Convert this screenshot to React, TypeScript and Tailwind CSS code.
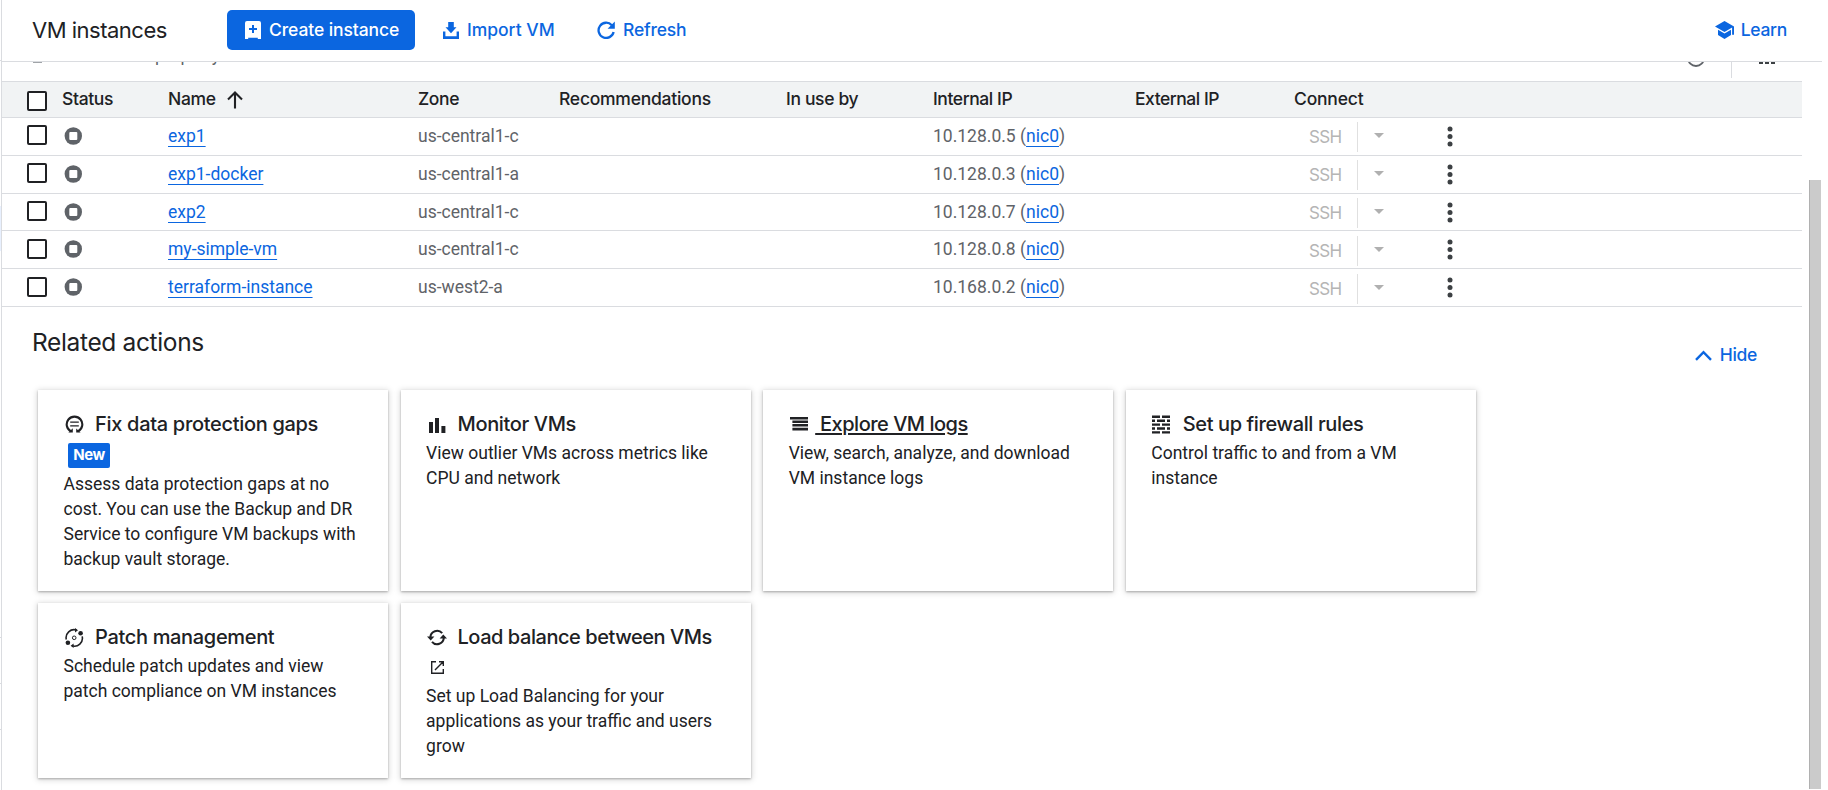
import React from "react";

const INTER = "font-['Inter',sans-serif]";

const vms = [
  { name: "exp1", zone: "us-central1-c", ip: "10.128.0.5", row: "h-[38px]", nudge: "pt-0" },
  { name: "exp1-docker", zone: "us-central1-a", ip: "10.128.0.3", row: "h-[38px]", nudge: "pt-0" },
  { name: "exp2", zone: "us-central1-c", ip: "10.128.0.7", row: "h-[37px]", nudge: "pt-0" },
  { name: "my-simple-vm", zone: "us-central1-c", ip: "10.128.0.8", row: "h-[38px]", nudge: "pt-px" },
  { name: "terraform-instance", zone: "us-west2-a", ip: "10.168.0.2", row: "h-[38px]", nudge: "pt-px" },
];

const GRID =
  "grid grid-cols-[60px_106px_250px_141px_227px_147px_202px_159px_143px_1fr]";

function CheckBox() {
  return <span className="block size-5 rounded-[2px] border-2 border-[#202124] bg-white" />;
}

function CreateIcon() {
  return (
    <svg width="16" height="18" viewBox="0 0 16 18" className="shrink-0">
      <path
        fillRule="evenodd"
        fill="#fff"
        d="M2 0h12a2 2 0 0 1 2 2v16h-3.2v-1.3H3.2V18H0V2a2 2 0 0 1 2-2zm5 4v3H4v2h3v3h2V9h3V7H9V4z"
      />
    </svg>
  );
}

function ImportIcon() {
  return (
    <svg width="16" height="17" viewBox="0 0 16 17" className="shrink-0" fill="#0b66e0">
      <path d="M5.2 0h5.6v5.2h2.7L8 11.2 2.5 5.2h2.7z" />
      <path d="M0 9.5h2.4v4.7h11.2V9.5H16V17H0z" />
    </svg>
  );
}

function RefreshIcon() {
  return (
    <svg width="18" height="18" viewBox="0 0 18 18" className="shrink-0">
      <path d="M14.8 4.2A7.6 7.6 0 1 0 16.6 11" fill="none" stroke="#0b66e0" strokeWidth="2.3" />
      <path d="M17.8.6v7.2h-7.2z" fill="#0b66e0" />
    </svg>
  );
}

function LearnIcon() {
  return (
    <svg width="19" height="18" viewBox="0 0 19 18" className="shrink-0" fill="#0b66e0">
      <path d="M9.5 0 19 5.4v8.4h-1.9V6.6L9.5 11 0 5.4z" />
      <path d="M3 8.8 9.5 12.6 16 8.8v5.1L9.5 18 3 13.9z" />
    </svg>
  );
}

function StatusIcon() {
  return (
    <svg width="18" height="18" viewBox="0 0 18 18">
      <circle cx="9.3" cy="9" r="8.7" fill="#5f6368" />
      <rect x="5.3" y="5" width="8" height="8" rx="1" fill="#fff" />
    </svg>
  );
}

function ProtectIcon() {
  return (
    <svg width="19" height="19" viewBox="0 0 19 19" fill="none" stroke="#202124">
      <path d="M6 16.4A7.8 7.8 0 1 1 13 16.4" strokeWidth="2.1" />
      <path d="M3.4 17.6h4.4v-4.4M15.6 17.6h-4.4v-4" strokeWidth="0" fill="#202124" />
      <path d="M5.2 7.2h8.6M5.2 10.8h8.6" strokeWidth="1.3" />
    </svg>
  );
}

function BarsIcon() {
  return (
    <svg width="19" height="19" viewBox="0 0 19 19" fill="#202124">
      <path d="M2 7h4v11H2zM8 3h4v15H8zM14.4 11h4v7h-4z" />
    </svg>
  );
}

function LogsIcon() {
  return (
    <svg width="19" height="19" viewBox="0 0 19 19" fill="#202124">
      <path d="M0 2h18v2.4H0zM2.4 5.4H18v2.5H2.4zM2.4 9.1H18v2.5H2.4zM2.4 12.8H18v2.6H2.4z" />
    </svg>
  );
}

function FirewallIcon() {
  return (
    <svg width="19" height="19" viewBox="0 0 19 19" fill="#202124">
      <path d="M0 .5h8v2.4H0zM10 .5h8v2.4h-8zM0 4.5h3v2.4H0zM5 4.5h8v2.4H5zM15 4.5h3v2.4h-3zM0 8.4h8v2.4H0zM10 8.4h8v2.4h-8zM0 12.3h3v2.4H0zM5 12.3h8v2.4H5zM15 12.3h3v2.4h-3zM0 16.2h8v2.3H0zM10 16.2h8v2.3h-8z" />
    </svg>
  );
}

function PatchIcon() {
  return (
    <svg width="19" height="20" viewBox="0 0 19 20" fill="none" stroke="#202124">
      <path d="M1.3 11.5A8 8 0 0 1 11.5 2.1M17.2 8.4A8 8 0 0 1 7 17.8" strokeWidth="1.6" />
      <path d="M10 0 13 2.2 10 4.4zM8.6 15.6v4.4L5.6 17.8z" fill="#202124" strokeWidth="0" />
      <circle cx="15.6" cy="5.2" r="2.3" fill="#202124" strokeWidth="0" />
      <circle cx="2.9" cy="14.8" r="2.3" fill="#202124" strokeWidth="0" />
      <circle cx="9.2" cy="9.8" r="1.8" strokeWidth="1" />
    </svg>
  );
}

function BalanceIcon() {
  return (
    <svg width="20" height="19" viewBox="0 0 20 19" fill="none" stroke="#202124">
      <path d="M3.4 9.5A6.7 6.7 0 0 1 15.2 5.2M16.8 9.5A6.7 6.7 0 0 1 5 13.8" strokeWidth="2" />
      <path d="M0 8.5h7.4L3.7 12.6zM12.6 10.5H20l-3.7-4.1z" fill="#202124" strokeWidth="0" />
    </svg>
  );
}

function ExternalIcon() {
  return (
    <svg width="13" height="13" viewBox="0 0 13 13" fill="none" stroke="#202124" strokeWidth="1.4">
      <path d="M5 .7H.7v11.6h11.6V8M8 .7h4.3V5M12.2.8 4 9" />
    </svg>
  );
}

type CardProps = {
  icon: React.ReactNode;
  title: string;
  tracking: string;
  body: string;
  underlined?: boolean;
  extra?: React.ReactNode;
  width?: string;
};

function Card({ icon, title, tracking, body, underlined, extra, width }: CardProps) {
  return (
    <div className="bg-white pt-[22px] pr-5 pl-[25.5px] text-[#202124] shadow-[0_1px_2px_rgba(0,0,0,0.26),0_1px_6px_1px_rgba(0,0,0,0.15)]">
      <div className={`${INTER} flex h-[25px] items-center whitespace-pre text-[20px] leading-[25px] font-medium ${tracking}`}>
        <span className="flex w-[26.5px] shrink-0 pl-px">{icon}</span>
        <span
          className={
            underlined
              ? "underline decoration-2 underline-offset-[2px] [text-decoration-skip-ink:auto]"
              : ""
          }
        >
          {" " + title}
        </span>
      </div>
      {extra ?? <div className="h-[4px]" />}
      <p className={`text-[17.5px] leading-[25px] ${width ?? ""}`}>{body}</p>
    </div>
  );
}

const headCell = `${INTER} text-[17.5px] leading-[34px] font-medium text-[#202124]`;

export default function App() {
  return (
    <div className="flex h-[790px] w-[1828px] overflow-hidden bg-white font-['Roboto',sans-serif] text-[17.5px]">
      <div className="flex w-px shrink-0 flex-col">
        <div className="mt-[60px] h-px bg-[#dadce0]" />
        <div className="mt-[145px] h-[45px] bg-[#e8f0fe]" />
        <div className="mt-[386px] h-px bg-[#dadce0]" />
        <div className="mt-[45px] h-px bg-[#dadce0]" />
        <div className="mt-[45px] h-px bg-[#dadce0]" />
      </div>
      <div className="flex w-[1821px] shrink-0 flex-col border-l border-[#dadce0]">
        <header className={`${INTER} flex h-[62px] shrink-0 items-center border-b border-[#dadce0] pb-px font-medium text-[#0b66e0]`}>
          <h1 className="w-[225px] pl-[30px] text-[22px] font-normal tracking-[-0.5px] text-[#202124]">VM instances</h1>
          <button className="flex h-10 w-[188px] items-center gap-2 rounded-[5px] bg-[#0b66e0] pl-[18px] tracking-[-0.1px] whitespace-nowrap text-white">
            <CreateIcon />
            Create instance
          </button>
          <button className="ml-7 flex w-[154px] items-center gap-2 tracking-[-0.02px]">
            <ImportIcon />
            Import VM
          </button>
          <button className="flex items-center gap-2 tracking-[-0.2px]">
            <RefreshIcon />
            Refresh
          </button>
          <button className="mr-[35px] ml-auto flex items-center gap-[7px] tracking-[-0.3px]">
            <LearnIcon />
            Learn
          </button>
        </header>

        <div className="flex min-h-0 flex-1">
          <main className="w-[1807px] shrink-0">
            <div className="h-[19px] overflow-hidden">
              <div className="-mt-[21px] flex h-7 w-full items-center pl-[31px] text-[#5f6368]">
                <svg width="9" height="12" viewBox="0 0 9 12" className="mt-[11px] mr-[29px] shrink-0">
                  <path d="M0 7h9" stroke="#80868b" strokeWidth="1.5" />
                </svg>
                <span className="ml-[39px] leading-7">Enter property name or value</span>
                <svg width="18" height="18" viewBox="0 0 18 18" className="mt-1.5 ml-auto shrink-0">
                  <circle cx="9" cy="9" r="8" fill="none" stroke="#5f6368" strokeWidth="1.8" />
                </svg>
                <span className="mt-[18px] ml-[26px] h-7 w-px bg-[#dadce0]" />
                <svg width="16" height="16" viewBox="0 0 16 16" className="mt-0.5 mr-[34px] ml-[27px] shrink-0">
                  <path d="M0 0h4v16H0zM6 0h4v16H6zM12 0h4v16h-4z" fill="#3c4043" />
                </svg>
              </div>
            </div>

            <div className="w-[1800px]">
              <div className={`${GRID} h-[37px] border-y border-[#dadce0] bg-[#f1f3f4]`}>
                <div className="pt-[9px] pl-[25px]"><CheckBox /></div>
                <div className={`${headCell} tracking-[-0.35px]`}>Status</div>
                <div className={`${headCell} flex tracking-[-0.3px]`}>
                  Name
                  <svg width="16" height="18" viewBox="0 0 16 18" className="mt-[9px] ml-[11.5px]">
                    <path d="M8 17.5V1.8M1 8.6l7-7 7 7" fill="none" stroke="#202124" strokeWidth="2.1" />
                  </svg>
                </div>
                <div className={`${headCell} tracking-[-0.35px]`}>Zone</div>
                <div className={`${headCell} tracking-[-0.25px]`}>Recommendations</div>
                <div className={`${headCell} tracking-[-0.35px]`}>In use by</div>
                <div className={`${headCell} tracking-[-0.42px]`}>Internal IP</div>
                <div className={`${headCell} tracking-[-0.48px]`}>External IP</div>
                <div className={`${headCell} tracking-[-0.2px]`}>Connect</div>
                <div />
              </div>
              {vms.map((vm) => (
                <div key={vm.name} className={`${GRID} ${vm.row} border-b border-[#dadce0] leading-[36px] text-[#5f6368]`}>
                  <div className={vm.nudge}>
                    <div className="pt-[7px] pl-[25px]"><CheckBox /></div>
                  </div>
                  <div className="pt-[9px] pl-[2px]"><StatusIcon /></div>
                  <div>
                    <a className="text-[#0b66e0] underline decoration-1 underline-offset-[4px] [text-decoration-skip-ink:none]">{vm.name}</a>
                  </div>
                  <div>{vm.zone}</div>
                  <div />
                  <div />
                  <div>
                    {vm.ip} (<a className="text-[#0b66e0] underline decoration-1 underline-offset-[4px] [text-decoration-skip-ink:none]">nic0</a>)
                  </div>
                  <div />
                  <div className={vm.nudge}>
                    <div className="flex pl-[15px]">
                      <span className={`${INTER} w-[48px] text-[17px] leading-[39px] tracking-[-0.7px] text-[#b5b5b5]`}>SSH</span>
                      <span className="mt-1 h-[30px] w-px bg-[#e0e0e0]" />
                      <svg width="10" height="5" viewBox="0 0 10 5" className="mt-[15px] ml-4">
                        <path d="M0 0h10L5 5z" fill="#b0b0b0" />
                      </svg>
                    </div>
                  </div>
                  <div className="pt-[8px] pl-[10px]">
                    <svg width="6" height="21" viewBox="0 0 6 21" fill="#3c4043">
                      <circle cx="3" cy="3" r="2.5" />
                      <circle cx="3" cy="10.5" r="2.5" />
                      <circle cx="3" cy="18" r="2.5" />
                    </svg>
                  </div>
                </div>
              ))}
            </div>

            <div className={`${INTER} flex h-[83px] justify-between pr-[52px] pl-[30px]`}>
              <h2 className="pt-[20px] text-[24.5px] leading-[30px] tracking-[-0.35px] text-[#202124]">Related actions</h2>
              <button className="mt-[36px] flex h-6 items-center gap-2 font-medium tracking-[-0.3px] text-[#0b66e0]">
                <svg width="17" height="11" viewBox="0 0 17 11">
                  <path d="M1 9.8 8.5 2.2 16 9.8" fill="none" stroke="#0b66e0" strokeWidth="2.4" />
                </svg>
                Hide
              </button>
            </div>

            <div className="ml-9 grid w-[1438px] grid-cols-[350px_350px_350px_350px] grid-rows-[201px_175px] gap-x-[12.6px] gap-y-3">
              <Card
                icon={<ProtectIcon />}
                title="Fix data protection gaps"
                tracking="tracking-[-0.31px]"
                body="Assess data protection gaps at no cost. You can use the Backup and DR Service to configure VM backups with backup vault storage."
                extra={
                  <div className={`${INTER} mt-[6px] mb-[4px] ml-[4.5px] h-[25px] w-[42px] rounded-[2px] bg-[#0b66e0] text-center text-[15px] leading-[24px] font-bold tracking-[-0.4px] text-white`}>
                    New
                  </div>
                }
              />
              <Card icon={<BarsIcon />} title="Monitor VMs" tracking="tracking-[-0.36px]" body="View outlier VMs across metrics like CPU and network" />
              <Card icon={<LogsIcon />} title="Explore VM logs" tracking="tracking-[-0.5px]" body="View, search, analyze, and download VM instance logs" underlined />
              <Card icon={<FirewallIcon />} title="Set up firewall rules" tracking="tracking-[-0.38px]" body="Control traffic to and from a VM instance" width="w-[270px]" />
              <Card icon={<PatchIcon />} title="Patch management" tracking="tracking-[-0.33px]" body="Schedule patch updates and view patch compliance on VM instances" />
              <Card
                icon={<BalanceIcon />}
                title="Load balance between VMs"
                tracking="tracking-[-0.45px]"
                body="Set up Load Balancing for your applications as your traffic and users grow"
                extra={<div className="mt-[11px] mb-[10px] ml-[4.5px] h-[13px]"><ExternalIcon /></div>}
              />
            </div>
          </main>
          <div className="mt-[118px] mb-px w-3 border-l border-[#b0b0b0] bg-[#cbcbcb]" />
        </div>
      </div>
    </div>
  );
}
